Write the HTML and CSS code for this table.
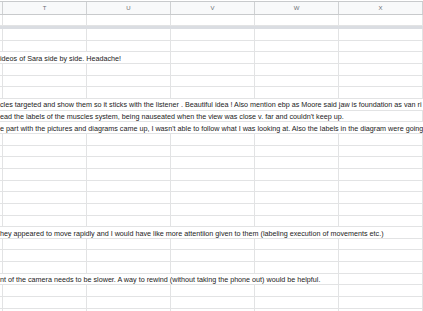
FILE: index.html
```html
<!DOCTYPE html>
<html>
<head>
<meta charset="utf-8">
<link rel="stylesheet" href="styles.css">
</head>
<body>
<div class="sheet">
  <div class="hdr">
    <div class="hc"></div><div class="hc">T</div><div class="hc">U</div><div class="hc">V</div><div class="hc">W</div><div class="hc">X</div><div class="hc"></div>
  </div>
  <div class="row frozen"><div class="c"></div><div class="c"></div><div class="c"></div><div class="c"></div><div class="c"></div><div class="c"></div><div class="c"></div></div>
  <div class="freeze"></div>
  <div class="row"><div class="c"></div><div class="c"></div><div class="c"></div><div class="c"></div><div class="c"></div><div class="c"></div><div class="c"></div></div>
  <div class="row"><div class="c"></div><div class="c"></div><div class="c"></div><div class="c"></div><div class="c"></div><div class="c"></div><div class="c"></div></div>
  <div class="row"><div class="c t span3">ideos of Sara side by side. Headache!</div><div class="c"></div><div class="c"></div><div class="c"></div><div class="c"></div></div>
  <div class="row"><div class="c"></div><div class="c"></div><div class="c"></div><div class="c"></div><div class="c"></div><div class="c"></div><div class="c"></div></div>
  <div class="row"><div class="c"></div><div class="c"></div><div class="c"></div><div class="c"></div><div class="c"></div><div class="c"></div><div class="c"></div></div>
  <div class="row"><div class="c"></div><div class="c"></div><div class="c"></div><div class="c"></div><div class="c"></div><div class="c"></div><div class="c"></div></div>
  <div class="row"><div class="c t spanall">cles targeted and show them so it sticks with the listener . Beautiful idea ! Also mention ebp as Moore said jaw is foundation as van ri</div></div>
  <div class="row"><div class="c t span6">ead the labels of the muscles system, being nauseated when the view was close v. far and couldn't keep up.</div><div class="c"></div></div>
  <div class="row"><div class="c t spanall">e part with the pictures and diagrams came up, I wasn't able to follow what I was looking at. Also the labels in the diagram were going</div></div>
  <div class="row"><div class="c"></div><div class="c"></div><div class="c"></div><div class="c"></div><div class="c"></div><div class="c"></div><div class="c"></div></div>
  <div class="row"><div class="c"></div><div class="c"></div><div class="c"></div><div class="c"></div><div class="c"></div><div class="c"></div><div class="c"></div></div>
  <div class="row"><div class="c"></div><div class="c"></div><div class="c"></div><div class="c"></div><div class="c"></div><div class="c"></div><div class="c"></div></div>
  <div class="row"><div class="c"></div><div class="c"></div><div class="c"></div><div class="c"></div><div class="c"></div><div class="c"></div><div class="c"></div></div>
  <div class="row"><div class="c"></div><div class="c"></div><div class="c"></div><div class="c"></div><div class="c"></div><div class="c"></div><div class="c"></div></div>
  <div class="row"><div class="c"></div><div class="c"></div><div class="c"></div><div class="c"></div><div class="c"></div><div class="c"></div><div class="c"></div></div>
  <div class="row"><div class="c"></div><div class="c"></div><div class="c"></div><div class="c"></div><div class="c"></div><div class="c"></div><div class="c"></div></div>
  <div class="row"><div class="c"></div><div class="c"></div><div class="c"></div><div class="c"></div><div class="c"></div><div class="c"></div><div class="c"></div></div>
  <div class="row"><div class="c t span6">hey appeared to move rapidly and I would have like more attentiion given to them (labeling execution of movements etc.)</div><div class="c"></div></div>
  <div class="row"><div class="c"></div><div class="c"></div><div class="c"></div><div class="c"></div><div class="c"></div><div class="c"></div><div class="c"></div></div>
  <div class="row"><div class="c"></div><div class="c"></div><div class="c"></div><div class="c"></div><div class="c"></div><div class="c"></div><div class="c"></div></div>
  <div class="row"><div class="c"></div><div class="c"></div><div class="c"></div><div class="c"></div><div class="c"></div><div class="c"></div><div class="c"></div></div>
  <div class="row"><div class="c t span5">nt of the camera needs to be slower. A way to rewind (without taking the phone out) would be helpful.</div><div class="c"></div><div class="c"></div></div>
  <div class="row"><div class="c"></div><div class="c"></div><div class="c"></div><div class="c"></div><div class="c"></div><div class="c"></div><div class="c"></div></div>
  <div class="row"><div class="c"></div><div class="c"></div><div class="c"></div><div class="c"></div><div class="c"></div><div class="c"></div><div class="c"></div></div>
  <div class="row"><div class="c"></div><div class="c"></div><div class="c"></div><div class="c"></div><div class="c"></div><div class="c"></div><div class="c"></div></div>
</div>
</body>
</html>
```
FILE: styles.css
```css
html, body {
  margin: 0;
  padding: 0;
  background: #ffffff;
  overflow: hidden;
}
.sheet {
  width: 423px;
  padding-top: 1px;
  font-family: "Liberation Sans", Arial, sans-serif;
  color: #222222;
}
.hdr, .row {
  display: grid;
  grid-template-columns: 3px repeat(5, 84px) 1fr;
}
.hdr {
  height: 14px;
  box-sizing: border-box;
  background: #f8f9fa;
  border-top: 1px solid #c8cacc;
  border-bottom: 1px solid #c8cacc;
}
.hc {
  border-right: 1px solid #cfd1d3;
  font-size: 6px;
  line-height: 12px;
  text-align: center;
  color: #6b6e72;
}
.row {
  height: calc(35px / 3);
  box-sizing: border-box;
}
.row.frozen {
  height: 11px;
}
.freeze {
  height: 3px;
  background: #dadde2;
}
.c {
  border-right: 1px solid #e2e3e4;
  border-bottom: 1px solid #e2e3e4;
  min-width: 0;
}
.t {
  background: #ffffff;
  font-size: 7.2px;
  line-height: 11px;
  padding-top: 0.5px;
  white-space: nowrap;
  overflow: hidden;
}
.span3 { grid-column: 1 / span 3; }
.span5 { grid-column: 1 / span 5; }
.span6 { grid-column: 1 / span 6; }
.spanall { grid-column: 1 / -1; border-right: none; }
```
